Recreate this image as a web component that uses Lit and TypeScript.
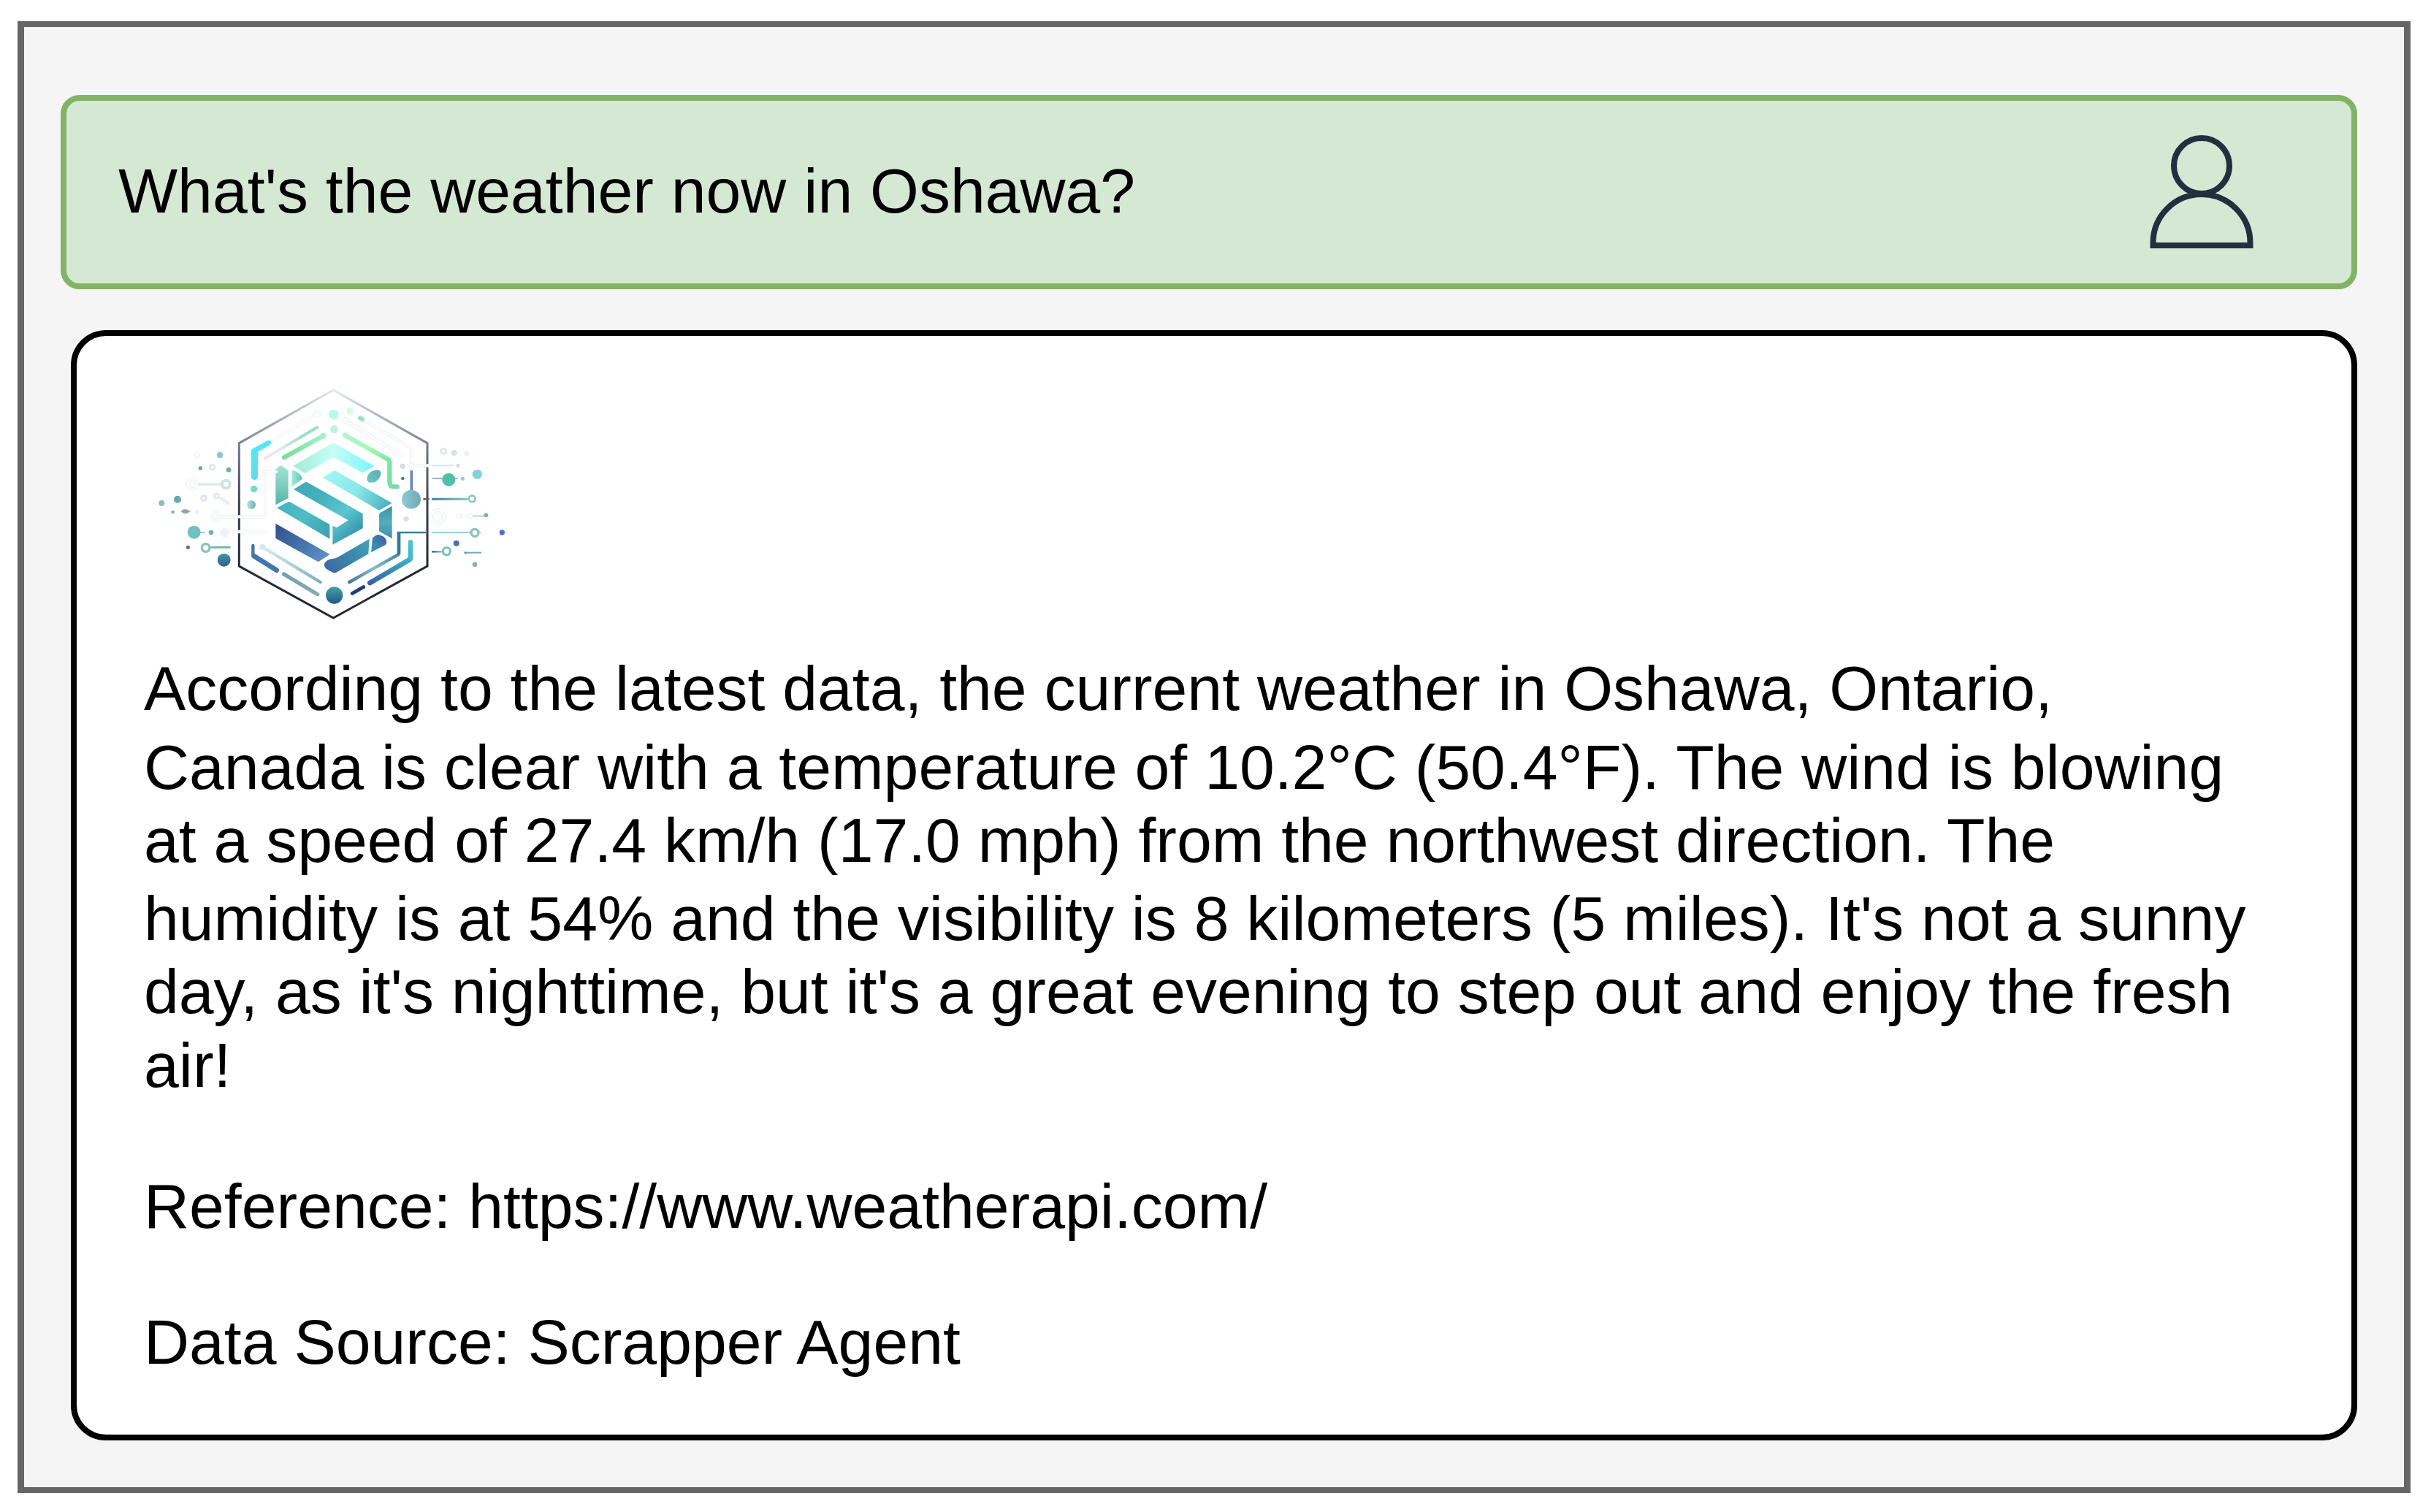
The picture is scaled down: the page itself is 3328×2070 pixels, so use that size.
import { LitElement, css, html, svg } from 'lit'
import { customElement, property } from 'lit/decorators.js'

type Dot = [cx: number, cy: number, r: number, fill: string]
type Ring = [cx: number, cy: number, r: number, width: number, stroke: string]
type Trace = [d: string, width: number, stroke: string]
type Shade = [id: string, coords: [number, number, number, number], stops: string[]]

interface Line {
  text: string
  /** Space above the line, in px */
  gap: number
}

const SHADES: Shade[] = [
  ['hex', [0, 72, 0, 1008], ['#e3e9f0', '#6f788c', '#3b4053', '#23283a', '#23283a']],
  ['top', [603, 0, 936, 0], ['#a3ead8', '#c4fff6', '#76f5fa']],
  ['side', [0, 381, 0, 544], ['#a3e6d4', '#58b3a8']],
  ['wedge', [598, 0, 641, 0], ['#a6ebe2', '#5fc4c0']],
  ['upper', [725, 402, 1010, 560], ['#a0f8f5', '#8ae8e8', '#46a9b8']],
  ['core', [606, 449, 850, 707], ['#3fa9b5', '#45b0bd', '#5cc6d1', '#3089a4']],
  ['lower', [537, 530, 754, 683], ['#46b4bf', '#4fbcc6', '#3a9dad']],
  ['blue', [532, 620, 740, 770], ['#33508a', '#4471a8', '#5f93c8']],
  ['right', [0, 548, 0, 682], ['#3593a6', '#55adbd', '#3c8fa8']],
  ['base', [750, 810, 917, 690], ['#3c6ba2', '#3d86aa', '#3fa3b6']],
  ['foot', [925, 740, 990, 690], ['#3a9db3', '#4064a4']],
  ['leaf', [907, 449, 964, 400], ['#6ccac4', '#58aeb0']],
  ['cyan', [0, 280, 0, 440], ['#4de9ff', '#5fdfe6']],
  ['orb', [0, 880, 0, 950], ['#43a3a0', '#25578b']],
  ['orb-left', [0, 743, 0, 797], ['#46959c', '#30618f']],
  ['orb-right', [1050, 0, 1128, 0], ['#8ccbd3', '#72a8b6']],
  ['orb-small', [414, 0, 450, 0], ['#b4e2dc', '#75adb3']],
  ['mist', [487, 353, 703, 225], ['#e6eaf1', '#e0eaee', '#a0dccb', '#9bdcc8']],
  ['mint', [566, 350, 727, 259], ['#7ddc9c', '#88e8ab', '#a8f2d2']],
  ['lime', [815, 257, 1033, 470], ['#b2f3cb', '#a5f9b8', '#7be89f', '#76d9a8']],
  ['ice', [478, 717, 716, 861], ['#d9ebf4', '#a8d3d8', '#7cadb9']],
  ['slate', [566, 828, 704, 911], ['#6fa1ae', '#8ba9ae']],
  ['ocean', [919, 864, 1085, 700], ['#3a63a4', '#3b81b4', '#36a7bb', '#50c6d2']],
  ['steel', [835, 861, 1038, 745], ['#487b8c', '#8abbc8', '#3f86a6']],
  ['feed', [1174, 0, 1320, 0], ['#3f78ab', '#7cc6be']],
  ['stub', [1173, 0, 1214, 0], ['#305b66', '#80c3b8']],
]

const SHAPES: [d: string, shade: string][] = [
  ['M603 384 762 292Q769 286 776 292L936 384 890 412 775 351Q769 349 763 351L653 414Z', 'top'],
  ['M532 398 548 383Q554 380 560 385L584 402V516L532 544Z', 'side'],
  ['M598 402H607Q638 415 642 437L603 466H598Z', 'wedge'],
  ['M725 431 766 406Q774 400 782 406L1010 536 963 563Q957 566 951 563Z', 'upper'],
  ['M606 480 650 452Q656 448 662 451L890 580V640L766 707V629L783 637 830 607Z', 'core'],
  ['M537 556 580 533Q587 529 594 533L754 624V683Z', 'lower'],
  ['M532 620 755 747 712 775Q707 778 702 775L532 681Z', 'blue'],
  ['M1010 548V682L957 652V586Q957 580 962 576Z', 'right'],
  ['M917 683 913 745 781 821Q774 825 766 821L742 808Q731 799 732 785 740 767 770 764 780 764 790 757Z', 'base'],
  ['M930 679Q947 664 957 666L976 674Q987 684 988 697L984 707 924 739Z', 'foot'],
  ['M907 436Q912 406 945 400 962 398 964 412 964 435 942 449 907 460 907 436Z', 'leaf'],
  ['M432 322Q432 315 440 311L500 279Q512 276 514 288 512 296 505 299L459 326V430Q456 441 445 441 434 441 432 430Z', 'cyan'],
]

/** White traces with a hairline outline */
const GHOSTS: [d: string, width: number][] = [
  ['M535 268 702 170', 15],
  ['M820 198 1048 338', 15],
  ['M885 190 1090 310V382H1160', 13],
  ['M535 408H490V592H305', 13],
  ['M338 654H492', 13],
  ['M1283 589H1332', 11],
]

const TRACES: Trace[] = [
  ['M487 353 703 225', 12, 'url(#mist)'],
  ['M567 349 727 260', 19, 'url(#mint)'],
  ['M816 257 994 357Q1000 361 1000 368V452Q1002 470 1018 469H1031', 19, 'url(#lime)'],
  ['M879 187 888 192', 18, '#94e2c6'],
  ['M478 717 716 861', 13, 'url(#ice)'],
  ['M566 828 704 911', 16, 'url(#slate)'],
  ['M439 711V754L455 765', 13, '#4475ac'],
  ['M444 754 536 812', 20, '#4475ac'],
  ['M847 907 893 881', 15, '#233f79'],
  ['M919 864 1083 768Q1086 766 1086 760V697', 20, 'url(#ocean)'],
  ['M835 861 1035 748', 13, 'url(#steel)'],
  ['M217 459H305', 11, '#e2e9eb'],
  ['M289 507 310 518', 7, '#e4e9f0'],
  ['M312 519 337 537', 13, '#eaeef3'],
  ['M220 657H240', 4, '#7dbcbc'],
]

const FLAT_TRACES: Trace[] = [
  ['M1038 747V657', 14, '#3078a0'],
  ['M1031 657H1155', 7, '#33809a'],
  ['M1172 657H1332', 5, '#85b8b8'],
  ['M1368 658H1378', 3, '#85b8b8'],
  ['M1090 402V485', 11, '#6288c6'],
  ['M1138 520H1163', 8, '#596277'],
  ['M1174 520H1322', 9, 'url(#feed)'],
  ['M1172 382H1263', 6, '#d7e5eb'],
  ['M1175 435H1280', 5, '#6ea6a5'],
  ['M1340 589H1390', 3, '#6fa3a5'],
  ['M1173 736H1214', 7, 'url(#stub)'],
  ['M1310 740H1377', 6, '#7ba4b5'],
  ['M265 718H347', 8, '#6fb5ad'],
]

const DOTS: Dot[] = [
  [770, 172, 20, '#b5fbe9'],
  [838, 158, 14, '#d6fbe6'],
  [772, 233, 16, '#bbf4e3'],
  [443, 478, 14, '#6fdccb'],
  [432, 543, 18, 'url(#orb-small)'],
  [478, 717, 13, '#d6e9f2'],
  [773, 915, 35, 'url(#orb)'],
  [727, 260, 12, '#a5f0cf'],
  [322, 658, 18, '#edf1fb'],
  [303, 339, 13, '#8fcac6'],
  [223, 393, 8, '#5aa9a7'],
  [339, 400, 10, '#62b3b1'],
  [64, 536, 12, '#8fbdbc'],
  [129, 521, 15, '#66a9b0'],
  [110, 573, 7, '#8aacb0'],
  [209, 573, 9, '#e6f1f1'],
  [197, 656, 27, '#72c0c2'],
  [267, 657, 10, '#6eb4b2'],
  [172, 718, 8, '#4d7d93'],
  [320, 770, 27, 'url(#orb-left)'],
  [1053, 385, 11, '#d2e0e8'],
  [1054, 435, 7, '#458686'],
  [1089, 521, 39, 'url(#orb-right)'],
  [1068, 601, 11, '#d5e2ee'],
  [1281, 382, 8, '#d0dfe6'],
  [1265, 330, 12, '#d3e2eb'],
  [1317, 334, 11, '#ebf1f5'],
  [1360, 418, 20, '#85d3da'],
  [1243, 440, 27, '#52c0a6'],
  [1300, 436, 8, '#a0cccb'],
  [1396, 586, 9, '#7fb2b3'],
  [1462, 657, 11, '#4476c0'],
  [1274, 701, 12, '#4274bd'],
  [1311, 740, 5, '#5c98ac'],
  [1350, 788, 10, '#8eb0bf'],
]

const GHOST_DOTS: [cx: number, cy: number, r: number][] = [
  [702, 170, 14],
  [820, 198, 13],
  [487, 408, 9],
  [1088, 382, 10],
  [209, 339, 10],
  [1283, 589, 10],
  [1332, 589, 10],
  [190, 459, 25],
  [190, 459, 14],
  [287, 592, 21],
  [287, 592, 11],
  [1197, 592, 33],
  [1197, 592, 20],
]

const RINGS: Ring[] = [
  [272, 389, 10, 9, '#dfe7ed'],
  [328, 459, 16, 12, '#d5e0e3'],
  [237, 516, 10, 9, '#dde1ec'],
  [289, 507, 9, 7, '#dfe4ec'],
  [245, 720, 16, 10, '#86c1bb'],
  [1221, 323, 11, 8, '#dde5f0'],
  [1339, 518, 13, 8, '#8cc6bf'],
  [1350, 658, 15, 10, '#8cc4bb'],
  [1234, 734, 15, 10, '#80c3b8'],
]

/**
 * agent-logo: hexagon badge with the folded-ribbon mark and circuit traces
 */
@customElement('agent-logo')
export class AgentLogo extends LitElement {
  private renderShade([id, [x1, y1, x2, y2], stops]: Shade) {
    return svg`
      <linearGradient id=${id} gradientUnits="userSpaceOnUse" x1=${x1} y1=${y1} x2=${x2} y2=${y2}>
        ${stops.map((color, i) => svg`<stop offset=${i / (stops.length - 1)} stop-color=${color} />`)}
      </linearGradient>
    `
  }

  private renderTrace([d, width, stroke]: Trace) {
    return svg`<path d=${d} stroke-width=${width} stroke=${stroke} />`
  }

  render() {
    return html`
      <svg viewBox="0 0 1560 1050" aria-hidden="true">
        <defs>${SHADES.map((shade) => this.renderShade(shade))}</defs>

        <path
          class="hexagon"
          d="M769 72 1155 290V795L769 1008 382 795V290Z"
          stroke="url(#hex)"
        />

        ${SHAPES.map(([d, shade]) => svg`<path d=${d} fill="url(#${shade})" />`)}

        <g class="traces">
          ${GHOSTS.map(([d, width]) => this.renderTrace([d, width, '#e6ebee']))}
          ${GHOSTS.map(([d, width]) => this.renderTrace([d, width - 3, '#fbfcfd']))}
          ${TRACES.map((trace) => this.renderTrace(trace))}
        </g>
        <g class="flat traces">${FLAT_TRACES.map((trace) => this.renderTrace(trace))}</g>

        ${GHOST_DOTS.map(([cx, cy, r]) => svg`<circle class="ghost" cx=${cx} cy=${cy} r=${r} />`)}
        ${DOTS.map(([cx, cy, r, fill]) => svg`<circle cx=${cx} cy=${cy} r=${r} fill=${fill} />`)}
        ${RINGS.map(
          ([cx, cy, r, width, stroke]) =>
            svg`<circle cx=${cx} cy=${cy} r=${r} fill="#fff" stroke=${stroke} stroke-width=${width} />`,
        )}
        <path d="M143 570Q152 560 162 561 172 562 182 571 172 579 160 580 150 579 143 570Z" fill="#86abb0" />
      </svg>
    `
  }

  static styles = css`
    :host {
      display: block;
      width: 520px;
      height: 350px;
    }

    svg {
      display: block;
      width: 100%;
      height: 100%;
    }

    .hexagon {
      fill: none;
      stroke-width: 9;
    }

    .traces {
      fill: none;
      stroke-linecap: round;
      stroke-linejoin: round;
    }

    .flat {
      stroke-linecap: butt;
    }

    .ghost {
      fill: #fcfdfd;
      stroke: #e4e9ec;
      stroke-width: 2;
    }
  `
}

/**
 * user-message: the question bubble with the user icon at its end
 */
@customElement('user-message')
export class UserMessage extends LitElement {
  @property()
  text = ''

  render() {
    return html`
      <span class="text">${this.text}</span>
      <svg class="user" viewBox="0 0 142 156" aria-hidden="true">
        <circle cx="71" cy="43" r="38" />
        <path d="M4.5 152V148.500A66.500 66.500 0 0 1 137.500 148.500V152Z" />
      </svg>
    `
  }

  static styles = css`
    :host {
      display: flex;
      align-items: center;
      justify-content: space-between;
      box-sizing: border-box;
      height: 266px;
      padding: 0 134px 2px 71px;
      background: #d5e8d4;
      border: 8px solid #82b366;
      border-radius: 26px;
    }

    .text {
      padding-bottom: 2px;
      line-height: 100px;
      white-space: nowrap;
    }

    .user {
      width: 142px;
      height: 156px;
      fill: none;
      stroke: #232f3e;
      stroke-width: 8;
    }
  `
}

/**
 * agent-message: the answer card, logo on top and text lines below
 */
@customElement('agent-message')
export class AgentMessage extends LitElement {
  @property({ attribute: false })
  lines: Line[] = []

  render() {
    return html`
      <agent-logo></agent-logo>
      <div class="body">
        ${this.lines.map(
          ({ text, gap }) => html`<div class="line" style="padding-top: ${gap}px">${text}</div>`,
        )}
      </div>
    `
  }

  static styles = css`
    :host {
      display: flex;
      flex-direction: column;
      box-sizing: border-box;
      height: 1520px;
      padding: 50px 80px 0 92px;
      background: #fff;
      border: 8px solid #000;
      border-radius: 48px;
    }

    agent-logo {
      margin-left: 3px;
    }

    .body {
      padding-top: 32px;
    }

    .line {
      line-height: 100px;
      white-space: nowrap;
    }
  `
}

@customElement('app-root')
export class AppRoot extends LitElement {
  private question = "What's the weather now in Oshawa?"

  private answer: Line[] = [
    { text: 'According to the latest data, the current weather in Oshawa, Ontario,', gap: 0 },
    { text: 'Canada is clear with a temperature of 10.2°C (50.4°F). The wind is blowing', gap: 8 },
    { text: 'at a speed of 27.4 km/h (17.0 mph) from the northwest direction. The', gap: 0 },
    { text: "humidity is at 54% and the visibility is 8 kilometers (5 miles). It's not a sunny", gap: 7 },
    { text: "day, as it's nighttime, but it's a great evening to step out and enjoy the fresh", gap: 0 },
    { text: 'air!', gap: 1 },
    { text: 'Reference: https://www.weatherapi.com/', gap: 93 },
    { text: 'Data Source: Scrapper Agent', gap: 86 },
  ]

  render() {
    return html`
      <main class="chat">
        <user-message .text=${this.question}></user-message>
        <agent-message .lines=${this.answer}></agent-message>
      </main>
    `
  }

  static styles = css`
    :host {
      display: block;
      box-sizing: border-box;
      width: 3328px;
      height: 2070px;
      padding: 29px 28px 26px 24px;
      background: #fff;
      color: #000;
      font-family: 'Liberation Sans', Arial, Helvetica, sans-serif;
      font-size: 85.95px;
    }

    .chat {
      display: flex;
      flex-direction: column;
      gap: 56px;
      box-sizing: border-box;
      height: 100%;
      padding: 93px 64px 0 50px;
      background: #f5f5f5;
      border: solid #666;
      border-width: 8px 9px;
    }

    agent-message {
      margin-left: 14px;
    }
  `
}

declare global {
  interface HTMLElementTagNameMap {
    'agent-logo': AgentLogo
    'user-message': UserMessage
    'agent-message': AgentMessage
    'app-root': AppRoot
  }
}
